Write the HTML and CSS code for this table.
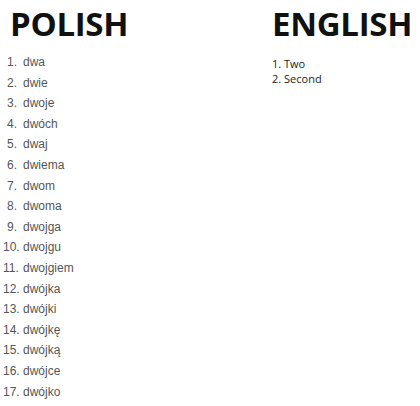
FILE: index.html
```html
<!DOCTYPE html>
<html>
<head>
<meta charset="utf-8">
<link rel="stylesheet" href="styles.css">
</head>
<body>
<div class="page">
  <section class="col col-pl">
    <h1 class="title">POLISH</h1>
    <ol class="pl-list">
      <li><span class="num">1.</span><span class="word">dwa</span></li>
      <li><span class="num">2.</span><span class="word">dwie</span></li>
      <li><span class="num">3.</span><span class="word">dwoje</span></li>
      <li><span class="num">4.</span><span class="word">dwóch</span></li>
      <li><span class="num">5.</span><span class="word">dwaj</span></li>
      <li><span class="num">6.</span><span class="word">dwiema</span></li>
      <li><span class="num">7.</span><span class="word">dwom</span></li>
      <li><span class="num">8.</span><span class="word">dwoma</span></li>
      <li><span class="num">9.</span><span class="word">dwojga</span></li>
      <li><span class="num">10.</span><span class="word">dwojgu</span></li>
      <li><span class="num">11.</span><span class="word">dwojgiem</span></li>
      <li><span class="num">12.</span><span class="word">dwójka</span></li>
      <li><span class="num">13.</span><span class="word">dwójki</span></li>
      <li><span class="num">14.</span><span class="word">dwójkę</span></li>
      <li><span class="num">15.</span><span class="word">dwójką</span></li>
      <li><span class="num">16.</span><span class="word">dwójce</span></li>
      <li><span class="num">17.</span><span class="word">dwójko</span></li>
    </ol>
  </section>
  <section class="col col-en">
    <h1 class="title">ENGLISH</h1>
    <ol class="en-list">
      <li>1. Two</li>
      <li>2. Second</li>
    </ol>
  </section>
</div>
</body>
</html>
```

FILE: styles.css
```css
html, body {
  margin: 0;
  padding: 0;
  background: #ffffff;
}
.page {
  display: flex;
  width: 420px;
  height: 406px;
  padding-top: 2px;
  box-sizing: border-box;
  overflow: hidden;
}
.col-pl {
  width: 250px;
  padding-left: 10px;
}
.col-en {
  flex: 1;
  padding-left: 12px;
}
.title {
  margin: 0;
  font-family: "Open Sans", sans-serif;
  font-weight: 700;
  font-size: 33px;
  line-height: 44px;
  color: #111111;
  letter-spacing: -0.3px;
}
.pl-list {
  list-style: none;
  margin: 0;
  padding: 6px 0 0 0;
  font-family: "Liberation Sans", Arial, sans-serif;
  font-size: 12px;
  line-height: 20.6px;
  color: #555555;
}
.pl-list li {
  display: flex;
  gap: 6px;
}
.pl-list .num {
  flex: none;
  width: 14px;
  margin-left: -7px;
  text-align: right;
}
.en-list {
  list-style: none;
  margin: 0;
  padding: 10px 0 0 0;
  font-family: "Open Sans", sans-serif;
  font-size: 11px;
  line-height: 15px;
  color: #222222;
}
```
